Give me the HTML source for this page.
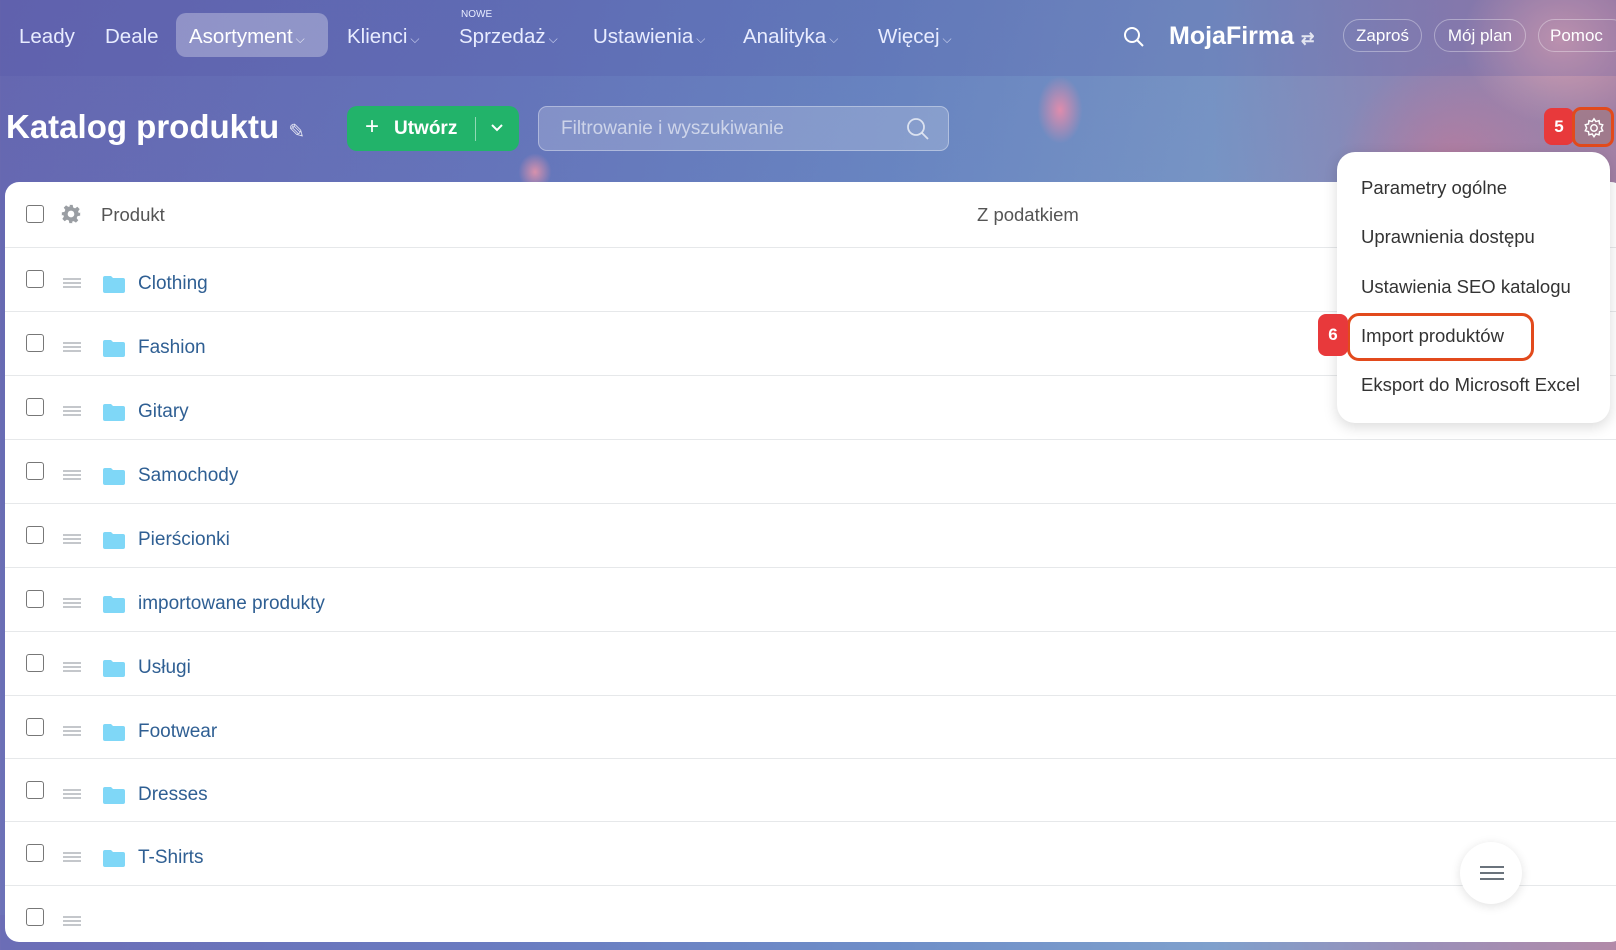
<!DOCTYPE html>
<html><head><meta charset="utf-8"><style>
*{box-sizing:border-box;margin:0;padding:0}
body{width:1616px;height:915px;overflow:hidden;font-family:"Liberation Sans",sans-serif;position:relative;
background:linear-gradient(90deg,#6b6db6 0%,#6a7bc0 30%,#6e8ec8 55%,#7fa0cc 75%,#9a8fb8 88%,#b28aa8 100%)}
.bg2{position:absolute;left:0;top:0;width:1616px;height:915px;background:
radial-gradient(ellipse 140px 120px at 1560px 40px,rgba(230,170,180,.75),transparent 70%),
radial-gradient(ellipse 160px 140px at 1450px 160px,rgba(200,120,150,.6),transparent 70%),
radial-gradient(ellipse 30px 45px at 1060px 110px,rgba(235,140,170,.9),transparent 75%),
radial-gradient(ellipse 22px 25px at 535px 172px,rgba(235,150,170,.85),transparent 75%),
linear-gradient(180deg,rgba(60,60,140,.15),rgba(120,160,200,.1))}
.nav{position:absolute;left:0;top:0;width:1616px;height:76px;background:rgba(80,80,160,.18)}
.ni{position:absolute;top:25px;color:#e8ecff;font-size:20.5px;white-space:nowrap}
.ni .c{font-size:12px;margin-left:3px;opacity:.8}
.pill{position:absolute;left:176px;top:13px;width:152px;height:44px;border-radius:10px;background:rgba(255,255,255,.3)}
.bp{position:absolute;top:19px;height:33px;border:1px solid rgba(255,255,255,.35);border-radius:17px;color:#fff;font-size:17px;line-height:31px;text-align:center}
.title{position:absolute;left:6px;top:108px;font-size:33px;color:#fff;font-weight:bold}
.btn{position:absolute;left:347px;top:106px;width:172px;height:45px;background:#22b36a;border-radius:10px;color:#fff;font-weight:bold;font-size:19px}
.search{position:absolute;left:538px;top:106px;width:411px;height:45px;border-radius:9px;background:rgba(255,255,255,.2);border:1px solid rgba(255,255,255,.35);color:rgba(255,255,255,.6);font-size:19px;padding:11px 22px}
.card{position:absolute;left:5px;top:182px;width:1620px;height:760px;background:#fff;border-radius:14px}
.row{position:absolute;left:5px;width:1611px;border-bottom:1px solid #e6e8ea}
.cb{position:absolute;left:21px;width:18px;height:18px;border:1.7px solid #777;border-radius:3px}
.dr{position:absolute;left:58px;width:18px;height:10px;border-top:2px solid #c4c7cb;border-bottom:2px solid #c4c7cb}
.dr:after{content:"";position:absolute;left:0;top:2px;width:18px;height:2px;background:#c4c7cb}
.fd{position:absolute;left:98px;width:22px;height:17px}
.nm{position:absolute;left:133px;font-size:19px;color:#2f5f93}
.menu{position:absolute;left:1337px;top:152px;width:273px;height:271px;background:#fff;border-radius:18px;box-shadow:0 4px 14px rgba(0,0,0,.15)}
.mi{position:absolute;left:24px;font-size:18.5px;color:#333}
.badge{position:absolute;background:#e8393b;color:#fff;font-weight:bold;font-size:17px;text-align:center;border-radius:8px}
</style></head><body>
<div class="bg2"></div>
<div class="nav"></div>
<div class="pill"></div>
<div class="ni" style="left:19px">Leady</div>
<div class="ni" style="left:105px">Deale</div>
<div class="ni" style="left:189px;color:#fff">Asortyment<span class="c">⌵</span></div>
<div class="ni" style="left:347px">Klienci<span class="c">⌵</span></div>
<div style="position:absolute;left:461px;top:9px;font-size:10px;color:#e8ecff">NOWE</div>
<div class="ni" style="left:459px">Sprzedaż<span class="c">⌵</span></div>
<div class="ni" style="left:593px">Ustawienia<span class="c">⌵</span></div>
<div class="ni" style="left:743px">Analityka<span class="c">⌵</span></div>
<div class="ni" style="left:878px">Więcej<span class="c">⌵</span></div>
<svg style="position:absolute;left:1122px;top:25px" width="24" height="24" viewBox="0 0 24 24" fill="none" stroke="#fff" stroke-width="2"><circle cx="10" cy="10" r="7"/><path d="M15 15l6 6"/></svg>
<div style="position:absolute;left:1169px;top:22px;font-size:25px;font-weight:bold;color:#fff">MojaFirma <span style="font-size:16px;opacity:.8">⇄</span></div>
<div class="bp" style="left:1343px;width:79px">Zaproś</div>
<div class="bp" style="left:1434px;width:92px">Mój plan</div>
<div class="bp" style="left:1538px;width:90px;text-align:left;padding-left:11px">Pomoc</div>
<div class="title">Katalog produktu <span style="font-size:20px;font-weight:normal;opacity:.8">✎</span></div>
<div class="btn"><span style="position:absolute;left:18px;top:7px;font-size:24px;font-weight:normal">+</span><span style="position:absolute;left:47px;top:12px">Utwórz</span><span style="position:absolute;left:128px;top:11px;width:1px;height:24px;background:rgba(255,255,255,.5)"></span><svg style="position:absolute;left:143px;top:17px" width="14" height="10" viewBox="0 0 14 10" fill="none" stroke="#fff" stroke-width="2"><path d="M2 2l5 5 5-5"/></svg></div>
<div class="search">Filtrowanie i wyszukiwanie<svg style="position:absolute;right:18px;top:10px" width="24" height="24" viewBox="0 0 24 24" fill="none" stroke="rgba(255,255,255,.7)" stroke-width="1.8"><circle cx="10" cy="10" r="8"/><path d="M16 16l6 6"/></svg></div>
<div class="badge" style="left:1544px;top:108px;width:30px;height:37px;line-height:37px">5</div>
<div style="position:absolute;left:1572px;top:107px;width:42px;height:40px;border:3px solid #e24a1c;border-radius:9px;background:rgba(160,120,130,.7)"><svg style="position:absolute;left:8px;top:7px" width="22" height="22" viewBox="0 0 24 24" fill="none" stroke="#fff" stroke-width="1.6"><circle cx="12" cy="12" r="3.5"/><path d="M12 2l2 3 3.5-1 .5 3.5 3.5 1-1.5 3.5 1.5 3-3.5 1-.5 3.5-3.5-1-2 3-2-3-3.5 1-.5-3.5-3.5-1L4 12 2.5 8.5 6 7.5 6.5 4 10 5z"/></svg></div>
<div class="card"></div>
<div class="row" style="top:182px;height:66px"><div class="cb" style="top:23px"></div><svg style="position:absolute;left:56px;top:22px" width="20" height="20" viewBox="0 0 24 24" fill="#9a9ea3"><path d="M10 1h4l.6 3.2 2.3 1 2.7-1.9 2.8 2.8-1.9 2.7 1 2.3L23 10v4l-3.2.6-1 2.3 1.9 2.7-2.8 2.8-2.7-1.9-2.3 1L14 23h-4l-.6-3.2-2.3-1-2.7 1.9-2.8-2.8 1.9-2.7-1-2.3L1 14v-4l3.2-.6 1-2.3-1.9-2.7 2.8-2.8 2.7 1.9 2.3-1z"/><circle cx="12" cy="12" r="4" fill="#fff"/></svg><div style="position:absolute;left:96px;top:22px;font-size:18.5px;color:#555">Produkt</div><div style="position:absolute;left:972px;top:22px;font-size:18.5px;color:#555">Z podatkiem</div></div>

<div class="row" style="top:248px;height:64px"><div class="cb" style="top:22px"></div><div class="dr" style="top:30px"></div><svg class="fd" style="top:28px" viewBox="0 0 22 17"><path d="M0 2a2 2 0 012-2h6l2 2h10a2 2 0 012 2v11a2 2 0 01-2 2H2a2 2 0 01-2-2z" fill="#7fd7f7"/></svg><div class="nm" style="top:25px">Clothing</div></div>
<div class="row" style="top:312px;height:64px"><div class="cb" style="top:22px"></div><div class="dr" style="top:30px"></div><svg class="fd" style="top:28px" viewBox="0 0 22 17"><path d="M0 2a2 2 0 012-2h6l2 2h10a2 2 0 012 2v11a2 2 0 01-2 2H2a2 2 0 01-2-2z" fill="#7fd7f7"/></svg><div class="nm" style="top:25px">Fashion</div></div>
<div class="row" style="top:376px;height:64px"><div class="cb" style="top:22px"></div><div class="dr" style="top:30px"></div><svg class="fd" style="top:28px" viewBox="0 0 22 17"><path d="M0 2a2 2 0 012-2h6l2 2h10a2 2 0 012 2v11a2 2 0 01-2 2H2a2 2 0 01-2-2z" fill="#7fd7f7"/></svg><div class="nm" style="top:25px">Gitary</div></div>
<div class="row" style="top:440px;height:64px"><div class="cb" style="top:22px"></div><div class="dr" style="top:30px"></div><svg class="fd" style="top:28px" viewBox="0 0 22 17"><path d="M0 2a2 2 0 012-2h6l2 2h10a2 2 0 012 2v11a2 2 0 01-2 2H2a2 2 0 01-2-2z" fill="#7fd7f7"/></svg><div class="nm" style="top:25px">Samochody</div></div>
<div class="row" style="top:504px;height:64px"><div class="cb" style="top:22px"></div><div class="dr" style="top:30px"></div><svg class="fd" style="top:28px" viewBox="0 0 22 17"><path d="M0 2a2 2 0 012-2h6l2 2h10a2 2 0 012 2v11a2 2 0 01-2 2H2a2 2 0 01-2-2z" fill="#7fd7f7"/></svg><div class="nm" style="top:25px">Pierścionki</div></div>
<div class="row" style="top:568px;height:64px"><div class="cb" style="top:22px"></div><div class="dr" style="top:30px"></div><svg class="fd" style="top:28px" viewBox="0 0 22 17"><path d="M0 2a2 2 0 012-2h6l2 2h10a2 2 0 012 2v11a2 2 0 01-2 2H2a2 2 0 01-2-2z" fill="#7fd7f7"/></svg><div class="nm" style="top:25px">importowane produkty</div></div>
<div class="row" style="top:632px;height:64px"><div class="cb" style="top:22px"></div><div class="dr" style="top:30px"></div><svg class="fd" style="top:28px" viewBox="0 0 22 17"><path d="M0 2a2 2 0 012-2h6l2 2h10a2 2 0 012 2v11a2 2 0 01-2 2H2a2 2 0 01-2-2z" fill="#7fd7f7"/></svg><div class="nm" style="top:25px">Usługi</div></div>
<div class="row" style="top:696px;height:63px"><div class="cb" style="top:22px"></div><div class="dr" style="top:30px"></div><svg class="fd" style="top:28px" viewBox="0 0 22 17"><path d="M0 2a2 2 0 012-2h6l2 2h10a2 2 0 012 2v11a2 2 0 01-2 2H2a2 2 0 01-2-2z" fill="#7fd7f7"/></svg><div class="nm" style="top:25px">Footwear</div></div>
<div class="row" style="top:759px;height:63px"><div class="cb" style="top:22px"></div><div class="dr" style="top:30px"></div><svg class="fd" style="top:28px" viewBox="0 0 22 17"><path d="M0 2a2 2 0 012-2h6l2 2h10a2 2 0 012 2v11a2 2 0 01-2 2H2a2 2 0 01-2-2z" fill="#7fd7f7"/></svg><div class="nm" style="top:25px">Dresses</div></div>
<div class="row" style="top:822px;height:64px"><div class="cb" style="top:22px"></div><div class="dr" style="top:30px"></div><svg class="fd" style="top:28px" viewBox="0 0 22 17"><path d="M0 2a2 2 0 012-2h6l2 2h10a2 2 0 012 2v11a2 2 0 01-2 2H2a2 2 0 01-2-2z" fill="#7fd7f7"/></svg><div class="nm" style="top:25px">T-Shirts</div></div>
<div class="row" style="top:886px;height:64px;border:none"><div class="cb" style="top:22px"></div><div class="dr" style="top:30px"></div></div>

<div style="position:absolute;left:1460px;top:842px;width:62px;height:62px;border-radius:50%;background:#fff;box-shadow:0 2px 10px rgba(0,0,0,.12)"><div style="position:absolute;left:20px;top:24px;width:24px;height:14px;border-top:2px solid #6a737c;border-bottom:2px solid #6a737c"></div><div style="position:absolute;left:20px;top:30px;width:24px;height:2px;background:#6a737c"></div></div>

<div class="menu">
<div class="mi" style="top:25px">Parametry ogólne</div>
<div class="mi" style="top:74px">Uprawnienia dostępu</div>
<div class="mi" style="top:124px">Ustawienia SEO katalogu</div>
<div style="position:absolute;left:10px;top:161px;width:187px;height:48px;border:3px solid #e24a1c;border-radius:12px"></div>
<div class="mi" style="top:173px">Import produktów</div>
<div class="mi" style="top:222px">Eksport do Microsoft Excel</div>
</div>
<div class="badge" style="left:1318px;top:314px;width:30px;height:42px;line-height:42px">6</div>
</body></html>
